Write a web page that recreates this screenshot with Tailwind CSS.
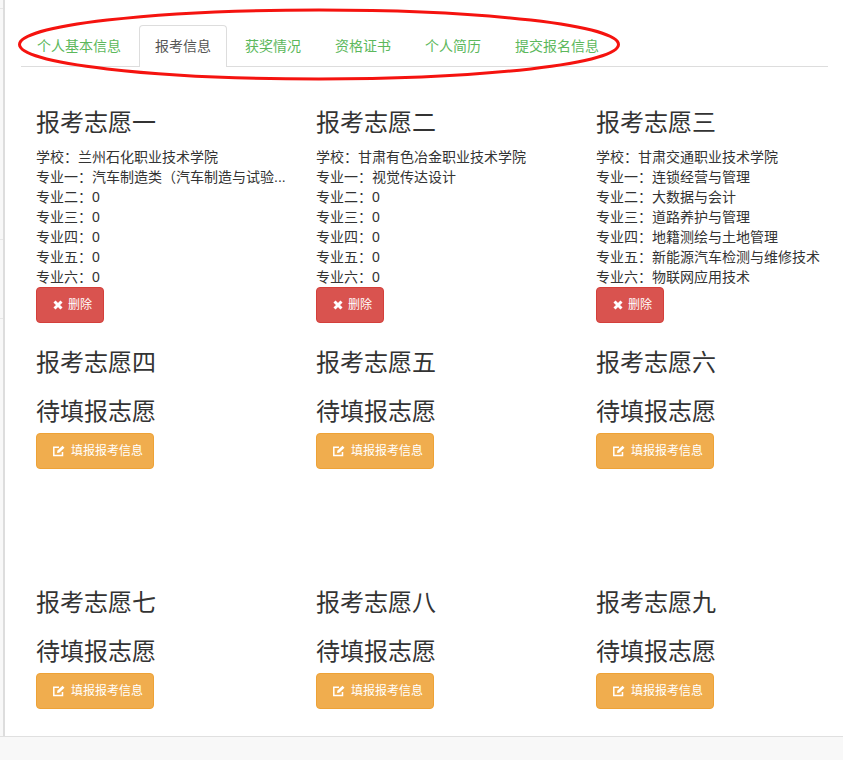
<!DOCTYPE html>
<html lang="zh"><head><meta charset="utf-8">
<script src="https://cdn.jsdelivr.net/npm/@tailwindcss/browser@4"></script>
</head>
<body class="relative h-[760px] w-[843px] overflow-hidden bg-[#f8f8f8] font-['Liberation_Sans','Noto_Sans_CJK_SC',sans-serif] text-[14px] leading-[20px] text-[#333]">
<div class="absolute left-0 top-[8px] h-px w-[3px] bg-[#e7e7e7]"></div>
<div class="absolute left-0 top-[239px] h-px w-[3px] bg-[#e7e7e7]"></div>
<div class="absolute left-0 top-[318px] h-px w-[3px] bg-[#e7e7e7]"></div>
<div class="h-[737px] border-b border-[#e0e0e0] pl-[3px]">
<div class="relative h-full border-l-2 border-[#ddd] bg-white pl-[16px] pr-[15px] pt-[25px]">
<svg class="absolute left-[13px] top-[5px]" width="612" height="80" viewBox="0 0 612 80" fill="none"><ellipse cx="301" cy="39.500" rx="299.500" ry="34.500" stroke="#f5130f" stroke-width="3"/></svg>
<div class="flex h-[42px] border-b border-[#ddd]">
<a class="mr-[2px] h-[41px] border border-transparent px-[15px] pt-[10px] text-[#5cb85c]">个人基本信息</a>
<a class="mr-[2px] h-[42px] rounded-t-[4px] border border-b-0 border-[#ddd] bg-white px-[15px] pt-[10px] text-[#555]">报考信息</a>
<a class="mr-[2px] h-[41px] border border-transparent px-[15px] pt-[10px] text-[#5cb85c]">获奖情况</a>
<a class="mr-[2px] h-[41px] border border-transparent px-[15px] pt-[10px] text-[#5cb85c]">资格证书</a>
<a class="mr-[2px] h-[41px] border border-transparent px-[15px] pt-[10px] text-[#5cb85c]">个人简历</a>
<a class="h-[41px] border border-transparent px-[15px] pt-[10px] text-[#5cb85c]">提交报名信息</a>
</div>
<div class="grid grid-cols-[280px_280px_232px] grid-rows-[240px_240px_100px] pl-[15px] pt-[43px]">
<div>
<h3 class="mb-[11px] text-[24px] leading-[26px] font-normal">报考志愿一</h3>
<p>学校：兰州石化职业技术学院</p>
<p>专业一：汽车制造类（汽车制造与试验...</p>
<p>专业二：0</p><p>专业三：0</p><p>专业四：0</p><p>专业五：0</p><p>专业六：0</p>
<button class="flex h-[36px] w-[68px] items-center gap-[5px] rounded-[4px] border border-[#d43f3a] bg-[#d9534f] pl-[16px] text-[12px] text-white"><svg width="10" height="10" viewBox="0 0 10 10"><path d="M1.500 1.500 8.500 8.500M8.500 1.500 1.500 8.500" stroke="#fff" stroke-width="3"/></svg>删除</button>
</div>
<div>
<h3 class="mb-[11px] text-[24px] leading-[26px] font-normal">报考志愿二</h3>
<p>学校：甘肃有色冶金职业技术学院</p>
<p>专业一：视觉传达设计</p>
<p>专业二：0</p><p>专业三：0</p><p>专业四：0</p><p>专业五：0</p><p>专业六：0</p>
<button class="flex h-[36px] w-[68px] items-center gap-[5px] rounded-[4px] border border-[#d43f3a] bg-[#d9534f] pl-[16px] text-[12px] text-white"><svg width="10" height="10" viewBox="0 0 10 10"><path d="M1.500 1.500 8.500 8.500M8.500 1.500 1.500 8.500" stroke="#fff" stroke-width="3"/></svg>删除</button>
</div>
<div>
<h3 class="mb-[11px] text-[24px] leading-[26px] font-normal">报考志愿三</h3>
<p>学校：甘肃交通职业技术学院</p>
<p>专业一：连锁经营与管理</p>
<p>专业二：大数据与会计</p><p>专业三：道路养护与管理</p><p>专业四：地籍测绘与土地管理</p><p>专业五：新能源汽车检测与维修技术</p><p>专业六：物联网应用技术</p>
<button class="flex h-[36px] w-[68px] items-center gap-[5px] rounded-[4px] border border-[#d43f3a] bg-[#d9534f] pl-[16px] text-[12px] text-white"><svg width="10" height="10" viewBox="0 0 10 10"><path d="M1.500 1.500 8.500 8.500M8.500 1.500 1.500 8.500" stroke="#fff" stroke-width="3"/></svg>删除</button>
</div>
<div><h3 class="mb-[23px] text-[24px] leading-[26px] font-normal">报考志愿四</h3><h3 class="mb-[8px] text-[24px] leading-[26px] font-normal">待填报志愿</h3><button class="flex h-[36px] w-[118px] items-center gap-[6px] rounded-[4px] border border-[#eea236] bg-[#f0ad4e] pl-[16px] text-[12px] text-white"><svg width="12" height="12" viewBox="0 0 12 12" fill="none"><path d="M9.500 7v3.500H.8V2.200H6" stroke="#fff" stroke-width="1.500"/><path d="M4 8 4.500 5.500 9.500.8 11.500 2.800 6.500 7.500Z" fill="#fff"/></svg>填报报考信息</button></div>
<div><h3 class="mb-[23px] text-[24px] leading-[26px] font-normal">报考志愿五</h3><h3 class="mb-[8px] text-[24px] leading-[26px] font-normal">待填报志愿</h3><button class="flex h-[36px] w-[118px] items-center gap-[6px] rounded-[4px] border border-[#eea236] bg-[#f0ad4e] pl-[16px] text-[12px] text-white"><svg width="12" height="12" viewBox="0 0 12 12" fill="none"><path d="M9.500 7v3.500H.8V2.200H6" stroke="#fff" stroke-width="1.500"/><path d="M4 8 4.500 5.500 9.500.8 11.500 2.800 6.500 7.500Z" fill="#fff"/></svg>填报报考信息</button></div>
<div><h3 class="mb-[23px] text-[24px] leading-[26px] font-normal">报考志愿六</h3><h3 class="mb-[8px] text-[24px] leading-[26px] font-normal">待填报志愿</h3><button class="flex h-[36px] w-[118px] items-center gap-[6px] rounded-[4px] border border-[#eea236] bg-[#f0ad4e] pl-[16px] text-[12px] text-white"><svg width="12" height="12" viewBox="0 0 12 12" fill="none"><path d="M9.500 7v3.500H.8V2.200H6" stroke="#fff" stroke-width="1.500"/><path d="M4 8 4.500 5.500 9.500.8 11.500 2.800 6.500 7.500Z" fill="#fff"/></svg>填报报考信息</button></div>
<div><h3 class="mb-[23px] text-[24px] leading-[26px] font-normal">报考志愿七</h3><h3 class="mb-[8px] text-[24px] leading-[26px] font-normal">待填报志愿</h3><button class="flex h-[36px] w-[118px] items-center gap-[6px] rounded-[4px] border border-[#eea236] bg-[#f0ad4e] pl-[16px] text-[12px] text-white"><svg width="12" height="12" viewBox="0 0 12 12" fill="none"><path d="M9.500 7v3.500H.8V2.200H6" stroke="#fff" stroke-width="1.500"/><path d="M4 8 4.500 5.500 9.500.8 11.500 2.800 6.500 7.500Z" fill="#fff"/></svg>填报报考信息</button></div>
<div><h3 class="mb-[23px] text-[24px] leading-[26px] font-normal">报考志愿八</h3><h3 class="mb-[8px] text-[24px] leading-[26px] font-normal">待填报志愿</h3><button class="flex h-[36px] w-[118px] items-center gap-[6px] rounded-[4px] border border-[#eea236] bg-[#f0ad4e] pl-[16px] text-[12px] text-white"><svg width="12" height="12" viewBox="0 0 12 12" fill="none"><path d="M9.500 7v3.500H.8V2.200H6" stroke="#fff" stroke-width="1.500"/><path d="M4 8 4.500 5.500 9.500.8 11.500 2.800 6.500 7.500Z" fill="#fff"/></svg>填报报考信息</button></div>
<div><h3 class="mb-[23px] text-[24px] leading-[26px] font-normal">报考志愿九</h3><h3 class="mb-[8px] text-[24px] leading-[26px] font-normal">待填报志愿</h3><button class="flex h-[36px] w-[118px] items-center gap-[6px] rounded-[4px] border border-[#eea236] bg-[#f0ad4e] pl-[16px] text-[12px] text-white"><svg width="12" height="12" viewBox="0 0 12 12" fill="none"><path d="M9.500 7v3.500H.8V2.200H6" stroke="#fff" stroke-width="1.500"/><path d="M4 8 4.500 5.500 9.500.8 11.500 2.800 6.500 7.500Z" fill="#fff"/></svg>填报报考信息</button></div>
</div>
</div>
</div>
</body></html>
